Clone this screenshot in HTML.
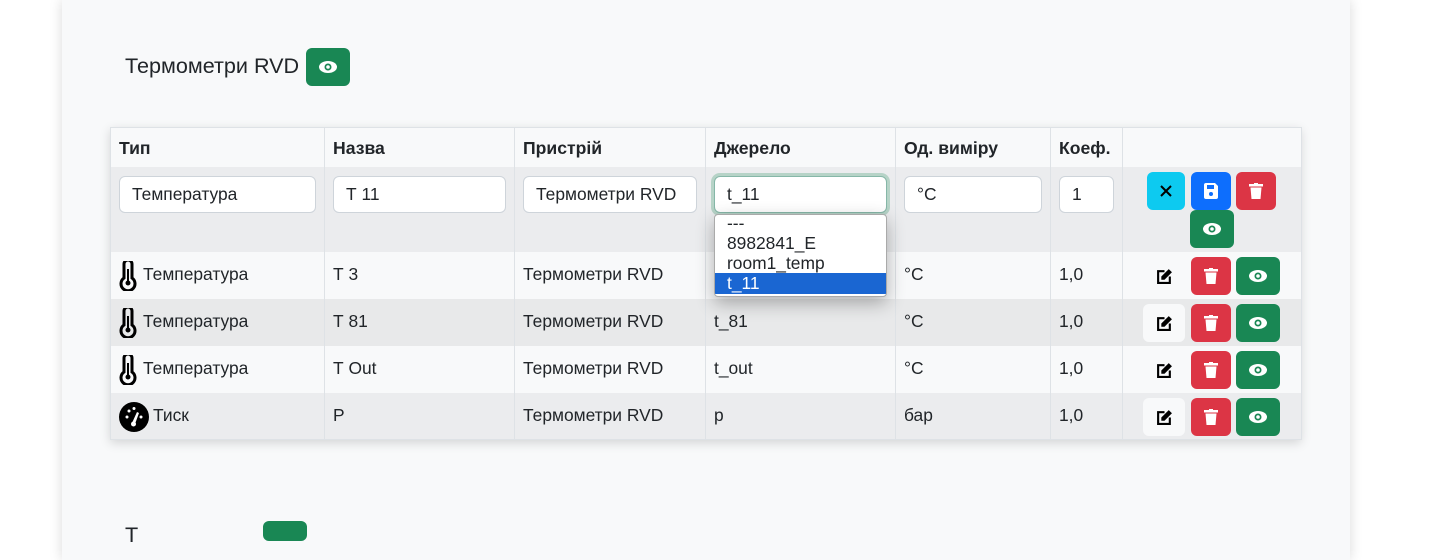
<!DOCTYPE html>
<html><head><meta charset="utf-8"><style>
*{box-sizing:border-box;margin:0;padding:0}
body{width:1436px;height:532px;background:#fff;overflow:hidden;position:relative;font-family:"Liberation Sans","DejaVu Sans",sans-serif;font-size:17.4px;color:#212529}
.panel{position:absolute;left:62px;top:0;width:1288px;height:560px;background:#f8f9fa;box-shadow:0 0 12px rgba(0,0,0,.15)}
.a{position:absolute}
.tbl{position:absolute;left:110px;top:127px;width:1191px;height:313px;box-shadow:0 3px 10px rgba(0,0,0,.15)}
.row{position:absolute;left:110px;width:1191px;border-bottom:1px solid #dee2e6}
.vl{position:absolute;top:127px;height:313px;width:1px;background:#dee2e6}
.t{position:absolute;white-space:nowrap}
.h{font-weight:bold;font-size:17.6px}
.inp{position:absolute;height:37px;background:#fff;border:1px solid #ced4da;border-radius:6px;padding:0 12px;line-height:35px}
.btn{position:absolute;width:40px;height:38px;border-radius:6px;display:flex;align-items:center;justify-content:center}
.g{background:#198754}.r{background:#dc3545}.b{background:#0d6efd}.c{background:#0dcaf0}.l{background:#f8f9fa}
</style></head><body>
<div class="panel"></div>
<div class="t" style="left:125px;top:53px;font-size:21.6px">Термометри RVD</div>
<div class="btn g" style="left:306px;top:48px;width:44px;height:38px"><svg width="20" height="14" viewBox="0 0 20 14"><ellipse cx="10" cy="7" rx="9" ry="6" fill="#fff"/><circle cx="10" cy="7" r="3.5" fill="#198754"/><circle cx="10" cy="7" r="1.8" fill="#fff"/></svg></div>

<div class="tbl"></div>
<div class="row" style="top:127px;height:41px;background:#f8f9fa;border-top:1px solid #dee2e6"></div>
<div class="row" style="top:167px;height:86px;background:#ebecee"></div>
<div class="row" style="top:252px;height:48px;background:#f8f9fa"></div>
<div class="row" style="top:299px;height:48px;background:#e8e9ea"></div>
<div class="row" style="top:346px;height:48px;background:#f8f9fa"></div>
<div class="row" style="top:393px;height:47px;background:#ebecee"></div>
<div class="vl" style="left:110px"></div><div class="vl" style="left:324px"></div><div class="vl" style="left:514px"></div><div class="vl" style="left:705px"></div><div class="vl" style="left:895px"></div><div class="vl" style="left:1050px"></div><div class="vl" style="left:1122px"></div><div class="vl" style="left:1301px"></div>

<div class="t h" style="left:119px;top:138px">Тип</div>
<div class="t h" style="left:333px;top:138px">Назва</div>
<div class="t h" style="left:523px;top:138px">Пристрій</div>
<div class="t h" style="left:714px;top:138px">Джерело</div>
<div class="t h" style="left:904px;top:138px">Од. виміру</div>
<div class="t h" style="left:1059px;top:138px">Коеф.</div>

<div class="inp" style="left:119px;top:176px;width:197px">Температура</div>
<div class="inp" style="left:333px;top:176px;width:173px">Т 11</div>
<div class="inp" style="left:523px;top:176px;width:174px">Термометри RVD</div>
<div class="inp" style="left:714px;top:176px;width:173px;border-color:#86b7a8;box-shadow:0 0 0 3px rgba(25,135,84,.25)">t_11</div>
<div class="inp" style="left:904px;top:176px;width:138px">°C</div>
<div class="inp" style="left:1059px;top:176px;width:55px">1</div>
<div class="btn c" style="left:1147px;top:172px;width:38px"><svg width="12" height="12"><path d="M1 1L11 11M11 1L1 11" stroke="#000" stroke-width="2"/></svg></div>
<div class="btn b" style="left:1191px;top:172px"><svg width="14" height="16" viewBox="0 0 14 16"><path d="M0 2a2 2 0 0 1 2-2h9l3 3v11a2 2 0 0 1-2 2H2a2 2 0 0 1-2-2z" fill="#fff"/><rect x="3" y="2" width="7" height="4" fill="#0d6efd"/><circle cx="7" cy="11" r="2" fill="#0d6efd"/></svg></div>
<div class="btn r" style="left:1236px;top:172px"><svg width="14" height="16" viewBox="0 0 14 16"><rect x="0" y="1" width="14" height="2.5" fill="#fff"/><rect x="5" y="0" width="4" height="2" fill="#fff"/><path d="M1.5 4.5h11l-1 11.5h-9z" fill="#fff"/></svg></div>
<div class="btn g" style="left:1190px;top:210px;width:44px"><svg width="20" height="14" viewBox="0 0 20 14"><ellipse cx="10" cy="7" rx="9" ry="6" fill="#fff"/><circle cx="10" cy="7" r="3.5" fill="#198754"/><circle cx="10" cy="7" r="1.8" fill="#fff"/></svg></div>

<svg class="a" style="left:119px;top:261px" width="18" height="30" viewBox="0 0 18 30"><path d="M5 3a4 4 0 0 1 8 0v14a7 7 0 1 1-8 0z" fill="none" stroke="#000" stroke-width="3"/><circle cx="9" cy="22" r="2.5" fill="#000"/><rect x="8" y="8" width="2" height="13" fill="#000"/></svg>
<div class="t" style="left:143px;top:264px">Температура</div>
<div class="t" style="left:333px;top:264px">Т 3</div>
<div class="t" style="left:523px;top:264px">Термометри RVD</div>
<div class="t" style="left:904px;top:264px">°C</div>
<div class="t" style="left:1059px;top:264px">1,0</div>

<svg class="a" style="left:119px;top:308px" width="18" height="30" viewBox="0 0 18 30"><path d="M5 3a4 4 0 0 1 8 0v14a7 7 0 1 1-8 0z" fill="none" stroke="#000" stroke-width="3"/><circle cx="9" cy="22" r="2.5" fill="#000"/><rect x="8" y="8" width="2" height="13" fill="#000"/></svg>
<div class="t" style="left:143px;top:311px">Температура</div>
<div class="t" style="left:333px;top:311px">Т 81</div>
<div class="t" style="left:523px;top:311px">Термометри RVD</div>
<div class="t" style="left:714px;top:311px">t_81</div>
<div class="t" style="left:904px;top:311px">°C</div>
<div class="t" style="left:1059px;top:311px">1,0</div>

<svg class="a" style="left:119px;top:355px" width="18" height="30" viewBox="0 0 18 30"><path d="M5 3a4 4 0 0 1 8 0v14a7 7 0 1 1-8 0z" fill="none" stroke="#000" stroke-width="3"/><circle cx="9" cy="22" r="2.5" fill="#000"/><rect x="8" y="8" width="2" height="13" fill="#000"/></svg>
<div class="t" style="left:143px;top:358px">Температура</div>
<div class="t" style="left:333px;top:358px">Т Out</div>
<div class="t" style="left:523px;top:358px">Термометри RVD</div>
<div class="t" style="left:714px;top:358px">t_out</div>
<div class="t" style="left:904px;top:358px">°C</div>
<div class="t" style="left:1059px;top:358px">1,0</div>

<svg class="a" style="left:119px;top:402px" width="30" height="30" viewBox="0 0 30 30"><circle cx="15" cy="15" r="15" fill="#000"/><path d="M13 21l5-11 2 1-4 11z" fill="#fff"/><circle cx="14.5" cy="22" r="2.5" fill="#fff"/><circle cx="8" cy="15" r="1.5" fill="#fff"/><circle cx="10" cy="9" r="1.5" fill="#fff"/><circle cx="15" cy="6.5" r="1.5" fill="#fff"/><circle cx="22" cy="15" r="1.5" fill="#fff"/></svg>
<div class="t" style="left:153px;top:405px">Тиск</div>
<div class="t" style="left:333px;top:405px">P</div>
<div class="t" style="left:523px;top:405px">Термометри RVD</div>
<div class="t" style="left:714px;top:405px">p</div>
<div class="t" style="left:904px;top:405px">бар</div>
<div class="t" style="left:1059px;top:405px">1,0</div>

<div id="rb"></div>
<script>
var tops=[257,304,351,398],h='';
var ed='<svg width="17" height="17" viewBox="0 0 16 16"><path d="M8 3H2v11h11V8" fill="none" stroke="#000" stroke-width="2"/><path d="M12 1l3 3-7 7H5V8z" fill="#000"/></svg>';
var tr='<svg width="14" height="16" viewBox="0 0 14 16"><rect x="0" y="1" width="14" height="2.5" fill="#fff"/><rect x="5" y="0" width="4" height="2" fill="#fff"/><path d="M1.5 4.5h11l-1 11.5h-9z" fill="#fff"/></svg>';
var ey='<svg width="20" height="14" viewBox="0 0 20 14"><ellipse cx="10" cy="7" rx="9" ry="6" fill="#fff"/><circle cx="10" cy="7" r="3.5" fill="#198754"/><circle cx="10" cy="7" r="1.8" fill="#fff"/></svg>';
tops.forEach(function(t,i){
h+='<div class="btn" style="left:1143px;top:'+t+'px;width:42px;'+(i%2?'background:#f8f9fa':'')+'">'+ed+'</div>';
h+='<div class="btn r" style="left:1191px;top:'+t+'px">'+tr+'</div>';
h+='<div class="btn g" style="left:1236px;top:'+t+'px;width:44px">'+ey+'</div>';});
document.getElementById('rb').innerHTML=h;
</script>

<div class="a" style="left:714px;top:214px;width:173px;height:83px;background:#fff;border:1px solid #aaa;border-radius:4px;box-shadow:0 6px 18px rgba(0,0,0,.3);overflow:hidden;font-size:17.4px;line-height:20px">
<div style="padding-left:12px;height:18px;line-height:16px">---</div>
<div style="padding-left:12px;height:20px">8982841_E</div>
<div style="padding-left:12px;height:20px">room1_temp</div>
<div style="padding-left:12px;height:21px;background:#1a66d2;color:#fff">t_11</div>
</div>

<div class="t" style="left:125px;top:522px;font-size:21.6px">Т</div>
<div class="a" style="left:263px;top:521px;width:44px;height:20px;background:#198754;border-radius:6px"></div>
</body></html>
